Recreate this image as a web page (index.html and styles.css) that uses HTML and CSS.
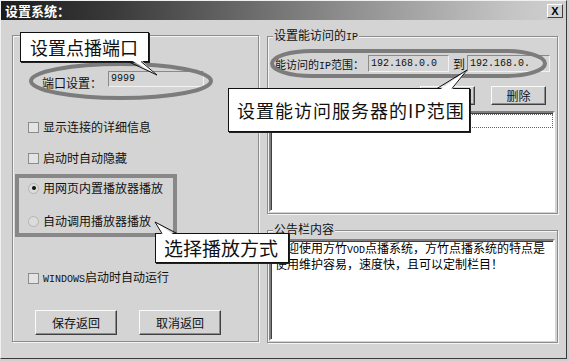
FILE: index.html
```html
<!DOCTYPE html>
<html lang="zh">
<head>
    <meta charset="UTF-8">
    <title>设置系统</title>
    <link rel="stylesheet" href="styles.css">
</head>
<body>
<div class="page">

<div class="window">
    <div class="titlebar">
        <span class="title">设置系统：</span>
        <span class="close">X</span>
    </div>

    <div class="content">
        <div class="group group-main">
            <div class="port-row">
                <span class="port-label">端口设置：</span>
                <span class="field port-field">9999</span>
            </div>
            <div class="check r1"><span class="box"></span><span>显示连接的详细信息</span></div>
            <div class="check r2"><span class="box"></span><span>启动时自动隐藏</span></div>
            <div class="check r3"><span class="box radio on"></span><span>用网页内置播放器播放</span></div>
            <div class="check r4"><span class="box radio"></span><span>自动调用播放器播放</span></div>
            <div class="check r5"><span class="box"></span><span><span class="half">WINDOWS</span>启动时自动运行</span></div>
            <div class="buttons">
                <span class="btn">保存返回</span>
                <span class="btn">取消返回</span>
            </div>
        </div>

        <div class="side">
            <div class="group group-ip">
                <span class="legend">设置能访问的<span class="half">IP</span></span>
                <div class="ip-row">
                    <span class="ip-label">能访问的<span class="half">IP</span>范围：</span>
                    <span class="field ip-field">192.168.0.0</span>
                    <span class="to">到</span>
                    <span class="field ip-field ip-end">192.168.0.</span>
                </div>
                <div class="ip-buttons">
                    <span class="btn btn-sm">添加</span>
                    <span class="btn btn-sm">删除</span>
                </div>
                <div class="listbox">
                    <div class="focus-row"></div>
                </div>
            </div>

            <div class="group group-notice">
                <span class="legend">公告栏内容</span>
                <div class="notice">欢迎使用方竹<span class="half">VOD</span>点播系统，方竹点播系统的特点是<br>使用维护容易，速度快，且可以定制栏目！</div>
            </div>
        </div>
    </div>
</div>

<!-- 书上加的标注 -->
<svg class="marks" width="569" height="361" viewBox="0 0 569 361">
    <ellipse cx="121" cy="81" rx="90" ry="17" fill="none" stroke="#7c7c7c" stroke-width="4"/>
    <rect x="272" y="51" width="273" height="25" rx="40" ry="12.5" fill="none" stroke="#7c7c7c" stroke-width="4"/>
    <rect x="17" y="176" width="158" height="59" fill="none" stroke="#888" stroke-width="4"/>
</svg>

<div class="callout callout-port">设置点播端口</div>
<div class="callout callout-ip">设置能访问服务器的IP范围</div>
<div class="callout callout-mode">选择播放方式</div>

<svg class="tails" width="569" height="361" viewBox="0 0 569 361">
    <polygon points="129,59 140,59 157,75" fill="#fff"/>
    <polyline points="128,61.5 157,75 141,61.5" fill="none" stroke="#111" stroke-width="1"/>
    <polygon points="438,91 451,91 467,70" fill="#fff"/>
    <polyline points="437,88.5 467,70 452,88.5" fill="none" stroke="#111" stroke-width="1"/>
    <polygon points="163,236 176,236 155,222" fill="#fff"/>
    <polyline points="162,233.5 155,222 177,233.5" fill="none" stroke="#111" stroke-width="1"/>
</svg>

</div>
</body>
</html>
```

FILE: styles.css
```css
body { margin: 0; background: #cfcfcf; font-family: "Noto Sans CJK SC", sans-serif; font-size: 12px; color: #111; }
.page { position: relative; width: 569px; height: 361px; overflow: hidden; }
.window { width: 567px; height: 359px; box-sizing: border-box; border: 1px solid; border-color: #f0f0f0 #3a3a3a #3a3a3a #f0f0f0; background: #d4d4d4; }

.titlebar { height: 19px; display: flex; align-items: center; justify-content: space-between; padding: 0 3px 0 4px;
    background: linear-gradient(to right, #1c1c1c 0%, #3a3a3a 20%, #8c8c8c 60%, #c4c4c4 90%, #d0d0d0 100%); }
.title { color: #fff; font-weight: bold; font-size: 13px; line-height: 19px; }
.close { width: 16px; height: 14px; box-sizing: border-box; border: 1px solid; border-color: #fff #404040 #404040 #fff; background: #d4d4d4;
    font: bold 11px/12px "Liberation Sans", sans-serif; text-align: center; color: #000; }

.content { display: flex; gap: 8px; padding: 15px 0 0 11px; }
.group { box-sizing: border-box; border: 1px solid #8c8c8c; box-shadow: inset 1px 1px 0 #f4f4f4, 1px 1px 0 #f4f4f4; display: flex; flex-direction: column; }
.group-main { width: 247px; height: 307px; }
.side { width: 291px; margin-top: 1px; display: flex; flex-direction: column; gap: 16px; }
.group-ip { height: 178px; }
.group-notice { height: 113px; }
.legend { align-self: flex-start; margin: -9px 0 0 5px; padding: 0 1px; height: 14px; line-height: 14px; background: #d4d4d4; }
.half { font-family: "Liberation Mono", monospace; font-size: 10px; }

.field { box-sizing: border-box; border: 1px solid; border-color: #8a8a8a #f2f2f2 #f2f2f2 #8a8a8a; background: #d6d6d6;
    font: 10px/14px "Liberation Mono", monospace; padding-left: 2px; white-space: nowrap; overflow: hidden; }

.port-row { display: flex; align-items: flex-start; margin-top: 35px; padding-left: 29px; height: 16px; }
.port-label { width: 66px; padding-top: 5px; line-height: 14px; }
.port-field { width: 96px; height: 16px; }

.check { display: flex; align-items: center; gap: 4px; height: 12px; padding-left: 15px; line-height: 12px; white-space: nowrap; }
.box { width: 11px; height: 11px; box-sizing: border-box; border: 1px solid #8c8c8c; background: #e4e4e4; flex: none; }
.radio { border-radius: 50%; border-color: #b4b4b4; background: #dcdcdc; display: flex; align-items: center; justify-content: center; }
.radio.on::after { content: ""; width: 4px; height: 4px; border-radius: 50%; background: #111; }
.r1 { margin-top: 34px; }
.r2 { margin-top: 19px; }
.r3 { margin-top: 18px; }
.r4 { margin-top: 21px; }
.r5 { margin-top: 45px; }

.buttons { display: flex; gap: 22px; padding-left: 22px; margin-top: 26px; }
.btn { box-sizing: border-box; width: 82px; height: 25px; line-height: 23px; text-align: center; background: #d4d4d4;
    border: 1px solid; border-color: #fafafa #404040 #404040 #fafafa; box-shadow: inset -1px -1px 0 #8c8c8c; }

.ip-row { display: flex; align-items: center; margin-top: 13px; padding-left: 7px; height: 17px; }
.ip-label { width: 93px; font-size: 11px; white-space: nowrap; }
.ip-field { width: 81px; height: 17px; line-height: 15px; }
.ip-end { width: 83px; }
.to { width: 12px; margin: 0 2px 0 4px; }

.ip-buttons { display: flex; justify-content: flex-end; gap: 16px; padding-right: 11px; margin-top: 14px; }
.btn-sm { width: 55px; height: 19px; line-height: 17px; }

.listbox { flex: 1; margin: 6px 2px 1px 1px; background: #fff; border: 2px solid; border-color: #808080 #fff #fff #808080; box-shadow: inset 1px 1px 0 #404040; }
.focus-row { height: 12px; margin: 1px 0 0 1px; border: 1px dotted #666; }

.notice { flex: 1; margin: 3px 2px 1px 1px; padding-left: 4px; background: #fff; border: 2px solid; border-color: #808080 #fff #fff #808080;
    box-shadow: inset 1px 1px 0 #404040; line-height: 13px; white-space: nowrap; overflow: hidden; color: #000; }

.marks, .tails { position: absolute; left: 0; top: 0; }
.callout { position: absolute; box-sizing: border-box; background: #fff; border: 1px solid #111; box-shadow: 1px 1px 0 #222; color: #111; white-space: nowrap; }
.callout-port { left: 20px; top: 32px; width: 129px; height: 30px; font-size: 18px; line-height: 28px; padding-left: 9px; }
.callout-ip { left: 228px; top: 88px; width: 242px; height: 44px; font-size: 18px; line-height: 36px; padding: 3px 0 0 8px; letter-spacing: 1px; }
.callout-mode { left: 155px; top: 233px; width: 134px; height: 30px; font-size: 19px; line-height: 28px; padding-left: 8px; }
```
